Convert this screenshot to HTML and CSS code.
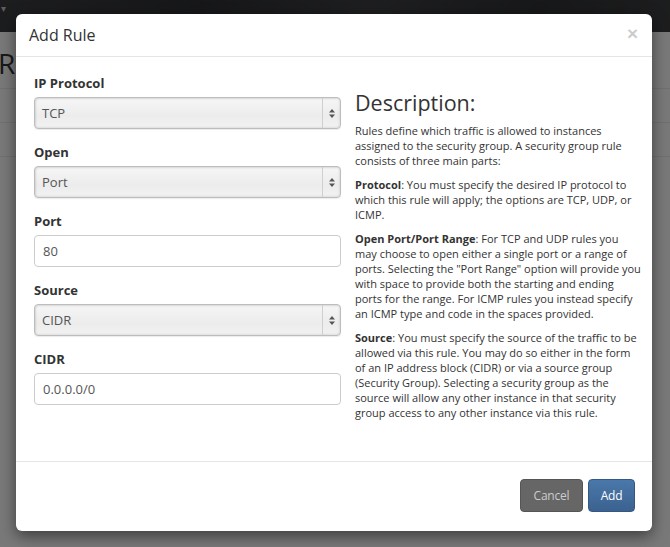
FILE: index.html
```html
<!DOCTYPE html>
<html>
<head>
<meta charset="utf-8">
<link rel="stylesheet" href="styles.css">
</head>
<body>
<div class="navbar"><span class="caret">▾</span></div>
<div class="page">
  <h1 class="page-title">Rules</h1>
  <div class="table">
    <div class="trow"></div>
    <div class="trow"></div>
    <div class="trow"></div>
  </div>
</div>
<div class="backdrop"></div>
<div class="modal">
  <div class="modal-header">
    <h3 class="modal-title">Add Rule</h3>
    <span class="close">×</span>
  </div>
  <div class="modal-body">
    <div class="form-col">
      <div class="group">
        <label class="label">IP Protocol</label>
        <div class="select"><span class="value">TCP</span><span class="arrows"><svg width="6" height="9" viewBox="0 0 6 9"><path d="M3 0 L6 3.5 L0 3.5 Z M0 5.5 L6 5.5 L3 9 Z" fill="#555"/></svg></span></div>
      </div>
      <div class="group">
        <label class="label">Open</label>
        <div class="select"><span class="value">Port</span><span class="arrows"><svg width="6" height="9" viewBox="0 0 6 9"><path d="M3 0 L6 3.5 L0 3.5 Z M0 5.5 L6 5.5 L3 9 Z" fill="#555"/></svg></span></div>
      </div>
      <div class="group">
        <label class="label">Port</label>
        <div class="input">80</div>
      </div>
      <div class="group">
        <label class="label">Source</label>
        <div class="select"><span class="value">CIDR</span><span class="arrows"><svg width="6" height="9" viewBox="0 0 6 9"><path d="M3 0 L6 3.5 L0 3.5 Z M0 5.5 L6 5.5 L3 9 Z" fill="#555"/></svg></span></div>
      </div>
      <div class="group">
        <label class="label">CIDR</label>
        <div class="input">0.0.0.0/0</div>
      </div>
    </div>
    <div class="desc-col">
      <h3 class="desc-title">Description:</h3>
      <p>Rules define which traffic is allowed to instances assigned to the security group. A security group rule consists of three main parts:</p>
      <p><strong>Protocol</strong>: You must specify the desired IP protocol to which this rule will apply; the options are TCP, UDP, or ICMP.</p>
      <p><strong>Open Port/Port Range</strong>: For TCP and UDP rules you may choose to open either a single port or a range of ports. Selecting the "Port Range" option will provide you with space to provide both the starting and ending ports for the range. For ICMP rules you instead specify an ICMP type and code in the spaces provided.</p>
      <p><strong>Source</strong>: You must specify the source of the traffic to be allowed via this rule. You may do so either in the form of an IP address block (CIDR) or via a source group (Security Group). Selecting a security group as the source will allow any other instance in that security group access to any other instance via this rule.</p>
    </div>
  </div>
  <div class="modal-footer">
    <button class="btn btn-cancel">Cancel</button>
    <button class="btn btn-add">Add</button>
  </div>
</div>
</body>
</html>
```

FILE: styles.css
```css
* { box-sizing: border-box; }
html, body { margin: 0; padding: 0; }
body {
  width: 670px;
  height: 547px;
  overflow: hidden;
  background: #f2f2f2;
  font-family: "Open Sans", "DejaVu Sans", sans-serif;
  color: #333;
  position: relative;
}
.navbar {
  height: 32px;
  background: linear-gradient(100deg, #3a3b3e 0%, #2e2f32 30%, #3c3d40 55%, #303134 80%, #3a3b3d 100%);
  position: relative;
}
.caret {
  display: block;
  padding: 2px 0 0 1px;
  font-size: 10px;
  line-height: 12px;
  color: #bbb;
}
.page { padding: 0; }
.page-title {
  margin: 14px 0 0 -2px;
  font-size: 28px;
  font-weight: 400;
  line-height: 34px;
  color: #333;
}
.table { margin-top: 8px; }
.trow {
  height: 34px;
  border-top: 1px solid #e0e0e0;
}
.backdrop {
  position: absolute;
  inset: 0;
  background: rgba(0, 0, 0, 0.5);
}
.modal {
  position: absolute;
  left: 16px;
  top: 14px;
  width: 636px;
  height: 517px;
  background: #fff;
  border-radius: 6px;
  box-shadow: 0 5px 15px rgba(0, 0, 0, 0.5);
  display: flex;
  flex-direction: column;
}
.modal-header {
  height: 43px;
  padding: 10px 14px 0 13px;
  border-bottom: 1px solid #e5e5e5;
  display: flex;
  justify-content: space-between;
}
.modal-title {
  margin: 0;
  font-size: 16px;
  font-weight: 400;
  line-height: 22px;
  color: #333;
}
.close {
  font-size: 19px;
  font-weight: 700;
  line-height: 20px;
  color: #000;
  opacity: 0.2;
  font-family: "Liberation Sans", Arial, sans-serif;
}
.modal-body {
  flex: 1;
  padding: 17px 10px 0 18px;
  display: grid;
  grid-template-columns: 307px 1fr;
  column-gap: 14px;
  align-items: start;
}
.group { margin-bottom: 14px; }
.label {
  display: block;
  font-size: 13px;
  font-weight: 700;
  line-height: 18px;
  margin-bottom: 5px;
  color: #333;
}
.select, .input {
  height: 32px;
  border-radius: 4px;
  font-size: 13px;
  color: #555;
  display: flex;
  align-items: center;
}
.select {
  border: 1px solid #bdbdbd;
  background: linear-gradient(#f6f6f6, #ececec 60%, #f2f2f2);
  box-shadow: inset 1px 1px 2px rgba(0,0,0,0.12), inset -1px -1px 2px rgba(0,0,0,0.08), 0 1px 1px rgba(0,0,0,0.08);
}
.select .value {
  flex: 1;
  padding-left: 7px;
}
.select .arrows {
  width: 18px;
  height: 100%;
  border-left: 1px solid #cfcfcf;
  display: flex;
  align-items: center;
  justify-content: center;
}
.input {
  border: 1px solid #ccc;
  background: #fff;
  padding-left: 8px;
}
.desc-title {
  margin: 17px 0 8px;
  font-size: 21.5px;
  font-weight: 400;
  line-height: 24px;
  color: #333;
}
.desc-col p {
  margin: 0 0 9px;
  font-size: 11px;
  line-height: 15px;
  color: #333;
}
.desc-col strong { font-weight: 700; }
.modal-footer {
  height: 70px;
  border-top: 1px solid #e5e5e5;
  padding: 17px 17px 0 0;
  display: flex;
  justify-content: flex-end;
  align-items: flex-start;
  gap: 5px;
}
.btn {
  height: 33px;
  border-radius: 4px;
  font-family: "Open Sans", sans-serif;
  font-size: 12px;
  letter-spacing: -0.2px;
  padding: 0;
  cursor: pointer;
}
.btn-cancel {
  width: 63px;
  background: #666;
  border: 1px solid #555;
  color: #ccc;
}
.btn-add {
  width: 47px;
  background: linear-gradient(#4a78aa, #3b6290);
  border: 1px solid #34587f;
  color: #fff;
}
```
